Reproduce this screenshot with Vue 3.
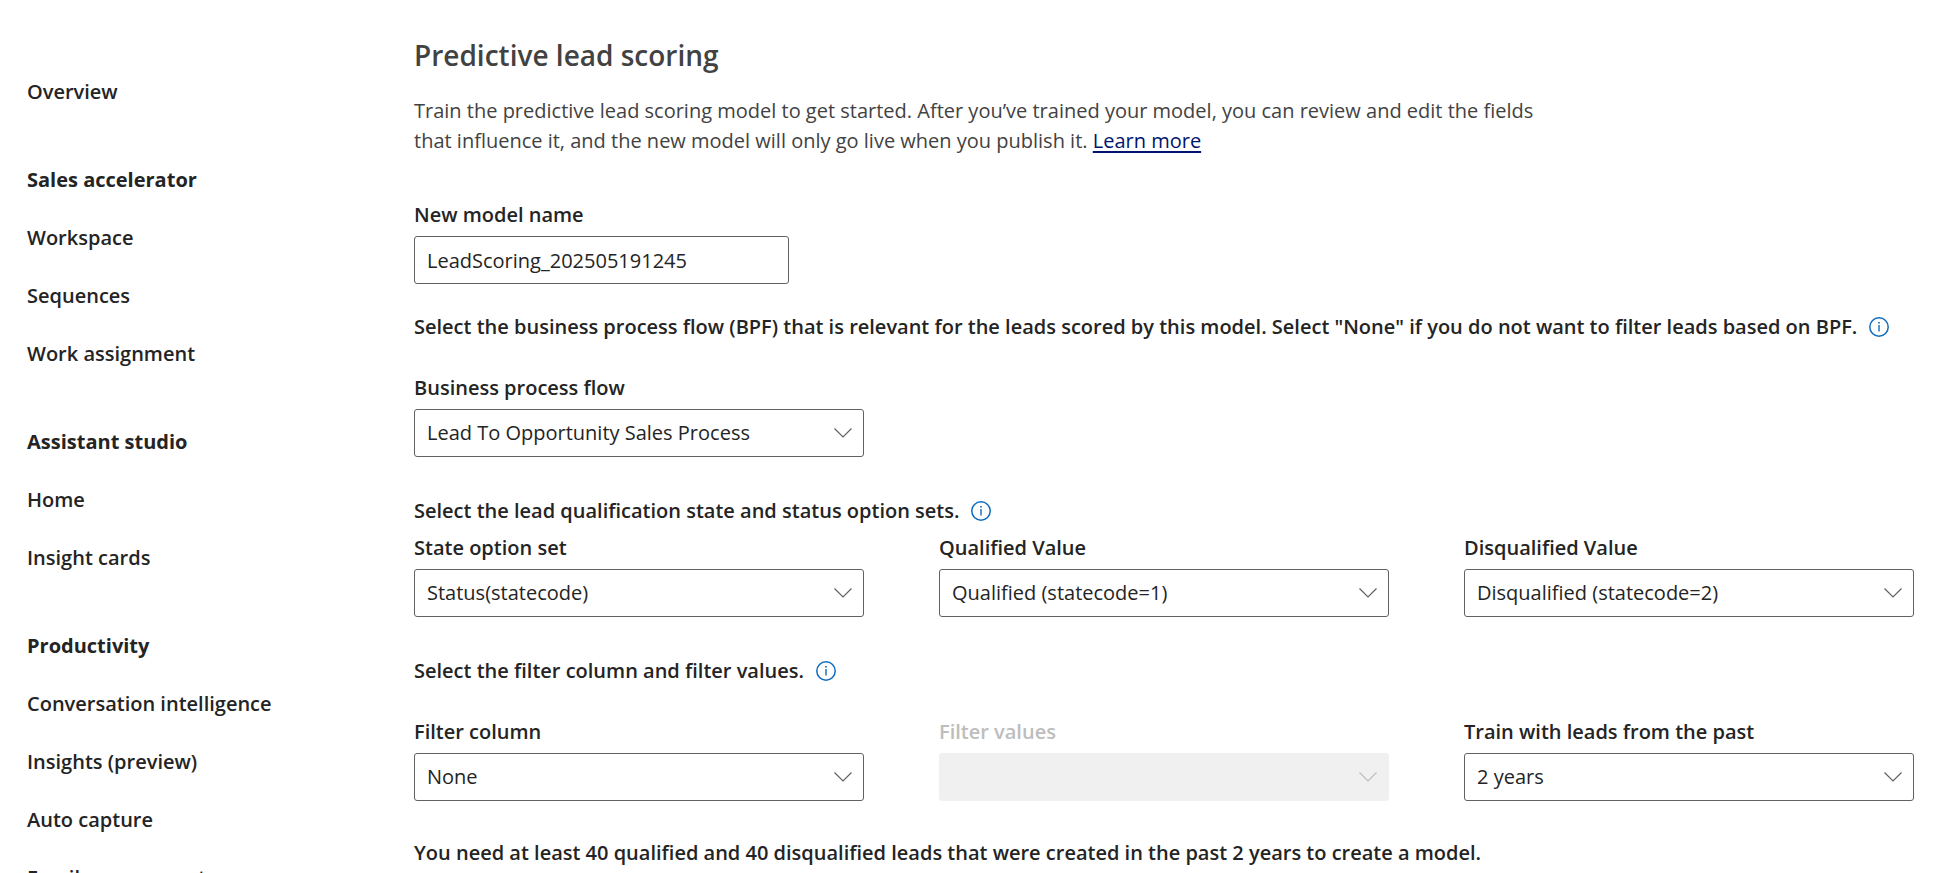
<script setup>
import { reactive } from 'vue'

const navGroups = [
  { items: ['Overview'] },
  { title: 'Sales accelerator', items: ['Workspace', 'Sequences', 'Work assignment'] },
  { title: 'Assistant studio', items: ['Home', 'Insight cards'] },
  {
    title: 'Productivity',
    items: ['Conversation intelligence', 'Insights (preview)', 'Auto capture', 'Email engagement'],
  },
]

const form = reactive({
  name: 'LeadScoring_202505191245',
  flow: 'Lead To Opportunity Sales Process',
  state: 'Status(statecode)',
  qualified: 'Qualified (statecode=1)',
  disqualified: 'Disqualified (statecode=2)',
  filterColumn: 'None',
  filterValues: '',
  period: '2 years',
})

const flowFields = [{ key: 'flow', label: 'Business process flow' }]
const stateFields = [
  { key: 'state', label: 'State option set' },
  { key: 'qualified', label: 'Qualified Value' },
  { key: 'disqualified', label: 'Disqualified Value' },
]
const filterFields = [
  { key: 'filterColumn', label: 'Filter column' },
  { key: 'filterValues', label: 'Filter values', disabled: true },
  { key: 'period', label: 'Train with leads from the past' },
]

const sections = [
  {
    id: 'flow',
    text: 'Select the business process flow (BPF) that is relevant for the leads scored by this model. Select "None" if you do not want to filter leads based on BPF.',
    fields: flowFields,
  },
  {
    id: 'state',
    text: 'Select the lead qualification state and status option sets.',
    fields: stateFields,
  },
  { id: 'filter', text: 'Select the filter column and filter values.', fields: filterFields },
]
</script>

<template>
  <div class="page">
    <nav class="sidebar" aria-label="Settings">
      <section v-for="(group, i) in navGroups" :key="i" class="group">
        <h2 v-if="group.title" class="group-title">{{ group.title }}</h2>
        <a v-for="item in group.items" :key="item" class="nav-link" href="#">{{ item }}</a>
      </section>
    </nav>

    <main class="content">
      <h1 class="title">Predictive lead scoring</h1>
      <p class="intro">
        Train the predictive lead scoring model to get started. After you’ve trained your model, you
        can review and edit the fields that influence it, and the new model will only go live when
        you publish it. <a class="learn" href="#">Learn more</a>
      </p>

      <div class="field name-field">
        <label class="label" for="name">New model name</label>
        <input id="name" v-model="form.name" class="control" type="text" />
      </div>

      <section v-for="section in sections" :key="section.id" class="section" :class="section.id">
        <div class="prompt">
          <span>{{ section.text }}</span>
          <button class="info" type="button" aria-label="More information">
            <svg viewBox="0 0 20 20" width="20" height="20" aria-hidden="true">
              <circle cx="10" cy="10" r="9.2" fill="none" stroke="currentColor" stroke-width="1.5" />
              <rect x="9.3" y="8" width="1.4" height="6.5" fill="currentColor" />
              <rect x="9.2" y="5" width="1.6" height="1.6" fill="currentColor" />
            </svg>
          </button>
        </div>
        <div class="row">
          <div v-for="f in section.fields" :key="f.key" class="field" :class="{ off: f.disabled }">
            <label class="label" :for="f.key">{{ f.label }}</label>
            <div class="select-wrap">
              <select :id="f.key" v-model="form[f.key]" class="control" :disabled="f.disabled">
                <option :value="form[f.key]">{{ form[f.key] }}</option>
              </select>
              <svg class="chevron" viewBox="0 0 18 10" width="18" height="10" aria-hidden="true">
                <path d="M0.5 0.5 L9 9 L17.5 0.5" fill="none" stroke="currentColor" stroke-width="1.2" />
              </svg>
            </div>
          </div>
        </div>
      </section>

      <p class="note">
        You need at least 40 qualified and 40 disqualified leads that were created in the past 2
        years to create a model.
      </p>
    </main>
  </div>
</template>

<style>
body {
  background: #fff;
}
html {
  overflow: hidden;
}
</style>

<style scoped>
.page {
  display: flex;
  height: 100vh;
  overflow: hidden;
  color: #242424;
  font-family: "Segoe UI", "Open Sans", "Noto Sans", sans-serif;
  font-size: 20px;
  line-height: 30px;
}
.sidebar {
  flex: none;
  width: 387px;
  padding: 63px 0 0 27px;
  display: flex;
  flex-direction: column;
  gap: 30px;
}
.group {
  display: flex;
  flex-direction: column;
  align-items: flex-start;
}
.group-title,
.nav-link {
  margin: 0;
  font-size: 20px;
  line-height: 58px;
  white-space: nowrap;
}
.group-title {
  font-weight: 700;
}
.nav-link {
  color: inherit;
  font-weight: 600;
  text-decoration: none;
}
.content {
  flex: 1;
  min-width: 0;
  padding: 34px 35px 0 0;
}
.title {
  margin: 0 0 20px;
  color: #424242;
  font-size: 28px;
  font-weight: 600;
  line-height: 42px;
}
.intro {
  max-width: 1160px;
  margin: 0 0 44px;
  color: #424242;
}
.learn {
  color: #00136f;
  text-decoration-thickness: 2px;
  text-underline-offset: 3px;
}
.field {
  display: flex;
  flex-direction: column;
  gap: 6px;
}
.label,
.prompt,
.note {
  font-weight: 600;
}
.name-field {
  width: 375px;
}
.control {
  box-sizing: border-box;
  display: block;
  width: 100%;
  height: 48px;
  margin: 0;
  padding: 0 12px;
  border: 1px solid #616161;
  border-radius: 3px;
  background: #fff;
  color: #242424;
  font: inherit;
  font-weight: 400;
  appearance: none;
}
.control:disabled {
  border-color: #f0f0f0;
  background: #f0f0f0;
  opacity: 1;
}
.select-wrap {
  display: grid;
  align-items: center;
}
.select-wrap > * {
  grid-area: 1 / 1;
}
.chevron {
  justify-self: end;
  margin-right: 12px;
  color: #616161;
  pointer-events: none;
}
.off {
  color: #bdbdbd;
}
.off .chevron {
  color: #bdbdbd;
}
.section {
  margin-top: 39px;
}
.section.flow {
  margin-top: 28px;
}
.prompt {
  display: flex;
  align-items: center;
  gap: 12px;
  margin-bottom: 31px;
  white-space: nowrap;
}
.state .prompt {
  margin-bottom: 7px;
}
.info {
  display: flex;
  padding: 0;
  border: 0;
  background: none;
  color: #0f6cbd;
}
.row {
  display: grid;
  grid-template-columns: repeat(3, 1fr);
  column-gap: 75px;
}
.note {
  margin: 37px 0 0;
}
</style>
